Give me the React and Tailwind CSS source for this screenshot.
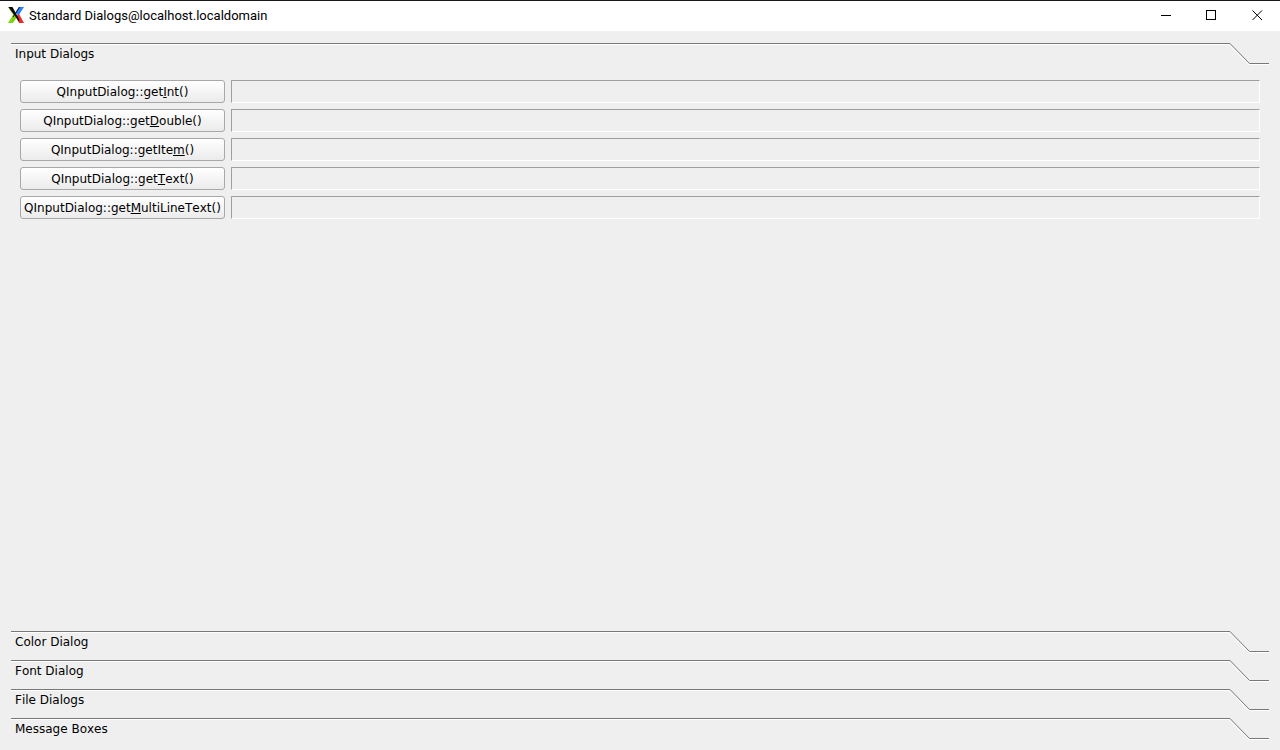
import { useState } from 'react';

const inputRows = [
  { id: 'int', before: 'QInputDialog::get', key: 'I', after: 'nt()' },
  { id: 'double', before: 'QInputDialog::get', key: 'D', after: 'ouble()' },
  { id: 'item', before: 'QInputDialog::getIte', key: 'm', after: '()' },
  { id: 'text', before: 'QInputDialog::get', key: 'T', after: 'ext()' },
  { id: 'multiline', before: 'QInputDialog::get', key: 'M', after: 'ultiLineText()' },
];

const sections = ['Input Dialogs', 'Color Dialog', 'Font Dialog', 'File Dialogs', 'Message Boxes'];

function XLogo() {
  return (
    <svg className="h-4 w-4 shrink-0" viewBox="0 0 16 16" aria-hidden="true">
      <path d="M0 0h3l5 7-2 2z" fill="#6fb800" />
      <path d="M11 0H16L10.500 8.500 7.500 6z" fill="#2a7fff" />
      <path d="M0 16h5L9.500 9 6 6.500z" fill="#7ed40c" />
      <path d="M8.500 9l2.500-2L16 16h-5z" fill="#ee2a24" />
      <path d="M.5 0h4L11.500 13l-1 1.500L7 9z" fill="#0a0a0a" />
      <path d="M11 0h1L5.500 10 4.500 10z" fill="#0a0a0a" />
    </svg>
  );
}

function TitleBar() {
  const control = 'flex h-[29px] w-[46px] items-center justify-center hover:bg-gray-200';
  return (
    <header className="flex h-[31px] shrink-0 items-start border-t border-[#18181a] bg-white pl-2">
      <div className="flex h-7 flex-1 items-center gap-[5px]">
        <XLogo />
        <h1 className="pt-0.5 font-[Roboto,sans-serif] text-[13px] leading-4 text-black">
          Standard Dialogs@localhost.localdomain
        </h1>
      </div>
      <button type="button" aria-label="Minimize" className={control}>
        <svg className="h-[11px] w-[11px]" viewBox="0 0 11 11" shapeRendering="crispEdges">
          <path d="M1 5.500h10" stroke="#000" fill="none" />
        </svg>
      </button>
      <button type="button" aria-label="Maximize" className={control}>
        <svg className="h-[11px] w-[11px]" viewBox="0 0 11 11" shapeRendering="crispEdges">
          <path d="M.5 .5h9v9h-9z" stroke="#000" fill="none" />
        </svg>
      </button>
      <button type="button" aria-label="Close" className={control}>
        <svg className="h-[11px] w-[11px]" viewBox="0 0 11 11">
          <path d="M.5 .5l9.500 9.500M10 .5L.5 10" stroke="#000" fill="none" />
        </svg>
      </button>
    </header>
  );
}

function SectionTab({ title, open, onOpen }) {
  return (
    <button
      type="button"
      aria-expanded={open}
      onClick={onOpen}
      className="flex h-[22px] w-full shrink-0 items-start text-left"
    >
      <span className="flex h-[22px] flex-1 items-start border-t border-[#787878] pl-1 shadow-[inset_0_1px_0_#fff]">
        <span className="pt-0.5 leading-4">{title}</span>
      </span>
      <svg className="h-[22px] w-10 shrink-0" viewBox="0 0 40 22" fill="none" aria-hidden="true">
        <path d="M0 1.500L20 21.500H40" stroke="#fff" />
        <path d="M0 .5H1L20.500 20.500H40" stroke="#787878" />
      </svg>
    </button>
  );
}

function InputPage() {
  return (
    <div className="grid grid-cols-[205px_1fr] gap-1.5 px-[9px] pt-2">
      {inputRows.map((row) => (
        <div key={row.id} className="contents">
          <button
            id={`open-${row.id}`}
            type="button"
            className="h-[23px] rounded-[3px] border border-[#a8a8a8] bg-linear-to-b from-white to-[#ebebeb] pt-px text-center leading-5 whitespace-nowrap active:bg-none"
          >
            {row.before}
            <span className="underline underline-offset-1">{row.key}</span>
            {row.after}
          </button>
          <output
            aria-labelledby={`open-${row.id}`}
            className="block h-[23px] border border-t-[#9f9f9f] border-r-white border-b-white border-l-[#9f9f9f]"
          />
        </div>
      ))}
    </div>
  );
}

export default function App() {
  const [current, setCurrent] = useState(0);
  return (
    <div className="flex min-h-screen flex-col bg-[#efefef] font-['DejaVu_Sans',sans-serif] text-[12px] text-black [font-kerning:none]">
      <TitleBar />
      <main className="flex flex-1 flex-col gap-[7px] px-[11px] pt-3 pb-2.5">
        {sections.map((title, index) => (
          <section
            key={title}
            className={index === current ? 'flex flex-1 flex-col gap-[7px]' : 'flex flex-col'}
          >
            <SectionTab title={title} open={index === current} onOpen={() => setCurrent(index)} />
            {index === current && index === 0 && <InputPage />}
          </section>
        ))}
      </main>
    </div>
  );
}
